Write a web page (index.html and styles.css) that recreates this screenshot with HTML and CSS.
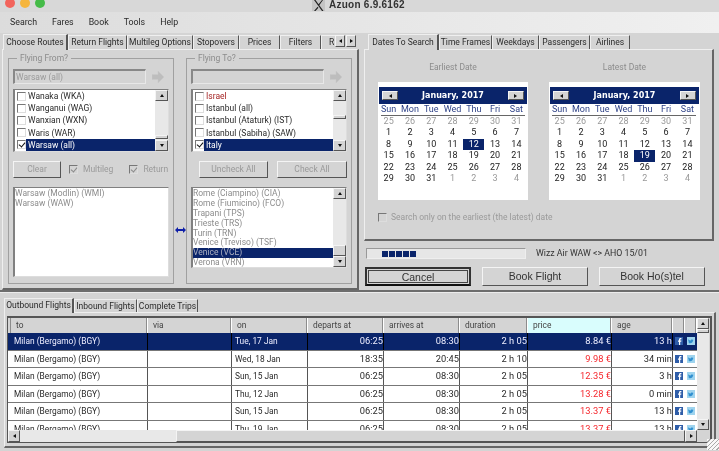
FILE: index.html
```html
<!DOCTYPE html>
<html lang="en">
<head>
<meta charset="utf-8">
<title>Azuon 6.9.6162</title>
<link rel="stylesheet" href="styles.css">
</head>
<body>
<svg class="defs" width="0" height="0">
  <symbol id="fb" viewBox="0 0 8 8"><rect width="8" height="8" fill="#2f5da8"/><path d="M5.2 8V4.8h1l.2-1.3H5.2v-.7c0-.4.1-.6.6-.6h.6V1H5.5C4.5 1 4 1.6 4 2.6v.9H3v1.3h1V8z" fill="#fff"/></symbol>
  <symbol id="tw" viewBox="0 0 8 8"><rect width="8" height="8" fill="#9fd4ee"/><path d="M1.2 2.3c.8.8 1.6 1.2 2.6 1.3 0-1 .9-1.5 1.7-.9l.8-.3-.4.6.6-.1-.5.6c0 1.700-1.500 3-3.500 2.700-.6 0-1-.2-1.400-.5.6 0 1-.1 1.400-.4-.6-.1-1-.4-1.100-.8h.5C1.500 4.200 1.200 3.800 1.200 3.300l.5.1C1.200 3.100 1 2.800 1.200 2.300z" fill="#2f8fd0"/></symbol>
</svg>
<div class="window">
  <header class="titlebar">
    <div class="lights"><i class="light light-red"></i><i class="light light-amber"></i><i class="light light-green"></i></div>
    <svg class="xicon" viewBox="0 0 13 11" width="13" height="11"><rect width="13" height="11" fill="#c4c4c4"/><path d="M2 0l8 11h1.500L3.500 0zM10 0L5.800 5.200l.8 1L11 0zM2 11l3.600-4.300.8 1L3.500 11z" fill="#222"/></svg>
    <span class="apptitle">Azuon 6.9.6162</span>
  </header>
  <nav class="menubar">
    <span>Search</span><span>Fares</span><span>Book</span><span>Tools</span><span>Help</span>
  </nav>

  <div class="top">
    <section class="leftcol">
      <div class="tabs tabs-left">
        <span class="tab active">Choose Routes</span>
        <span class="tab">Return Flights</span>
        <span class="tab">Multileg Options</span>
        <span class="tab">Stopovers</span>
        <span class="tab">Prices</span>
        <span class="tab">Filters</span>
        <span class="tab tab-cut">R</span>
        <span class="tabnav"><i class="btn mini"><b class="tri l"></b></i><i class="btn mini"><b class="tri r"></b></i></span>
      </div>
      <div class="panel routes">
        <fieldset class="group">
          <legend>Flying From?</legend>
          <div class="comborow">
            <div class="field">Warsaw (all)</div>
            <svg class="goarrow" viewBox="0 0 12 12" width="12" height="12"><path d="M0 3.500h6V0l6 6-6 6V8.500H0z" fill="#bdbdbd" stroke="#c8c8c8" stroke-width=".5"/></svg>
          </div>
          <div class="listbox checks">
            <div class="rows">
              <div class="row"><i class="cb"></i><span>Wanaka (WKA)</span></div>
              <div class="row"><i class="cb"></i><span>Wanganui (WAG)</span></div>
              <div class="row"><i class="cb"></i><span>Wanxian (WXN)</span></div>
              <div class="row"><i class="cb"></i><span>Waris (WAR)</span></div>
              <div class="row sel"><i class="cb on"></i><span>Warsaw (all)</span></div>
            </div>
            <div class="vbar"><i class="btn sb"><b class="tri u"></b></i><div class="track thumb-low"><i class="thumb thin"></i></div><i class="btn sb"><b class="tri d"></b></i></div>
          </div>
          <div class="actions">
            <span class="btn action clear">Clear</span>
            <label class="opt multileg"><i class="cb dis on"></i>Multileg</label>
            <label class="opt"><i class="cb dis on"></i>Return</label>
          </div>
          <div class="listbox plain tall">
            <div class="rows dimrows">
              <div class="line">Warsaw (Modlin) (WMI)</div>
              <div class="line">Warsaw (WAW)</div>
            </div>
          </div>
        </fieldset>

        <div class="swap">
          <svg viewBox="0 0 11 6" width="11" height="6"><path d="M0 3l3-3v2h5V0l3 3-3 3V4H3v2z" fill="#0f1fa8"/></svg>
        </div>

        <fieldset class="group">
          <legend>Flying To?</legend>
          <div class="comborow">
            <div class="field"></div>
            <svg class="goarrow" viewBox="0 0 12 12" width="12" height="12"><path d="M0 3.500h6V0l6 6-6 6V8.500H0z" fill="#bdbdbd" stroke="#c8c8c8" stroke-width=".5"/></svg>
          </div>
          <div class="listbox checks">
            <div class="rows">
              <div class="row"><i class="cb"></i><span class="redtext">Israel</span></div>
              <div class="row"><i class="cb"></i><span>Istanbul (all)</span></div>
              <div class="row"><i class="cb"></i><span>Istanbul (Ataturk) (IST)</span></div>
              <div class="row"><i class="cb"></i><span>Istanbul (Sabiha) (SAW)</span></div>
              <div class="row sel"><i class="cb on"></i><span>Italy</span></div>
            </div>
            <div class="vbar"><i class="btn sb"><b class="tri u"></b></i><div class="track thumb-mid"><i class="thumb thin"></i></div><i class="btn sb"><b class="tri d"></b></i></div>
          </div>
          <div class="actions actions-right">
            <span class="btn action uncheck">Uncheck All</span>
            <span class="btn action checkall">Check All</span>
          </div>
          <div class="listbox plain short">
            <div class="rows dimrows tight">
              <div class="line">Rome (Ciampino) (CIA)</div>
              <div class="line">Rome (Fiumicino) (FCO)</div>
              <div class="line">Trapani (TPS)</div>
              <div class="line">Trieste (TRS)</div>
              <div class="line">Turin (TRN)</div>
              <div class="line">Venice (Treviso) (TSF)</div>
              <div class="line sel">Venice (VCE)</div>
              <div class="line">Verona (VRN)</div>
            </div>
            <div class="vbar"><i class="btn sb"><b class="tri u"></b></i><div class="track thumb-end"><i class="thumb"></i></div><i class="btn sb"><b class="tri d"></b></i></div>
          </div>
        </fieldset>
      </div>
    </section>

    <section class="rightcol">
      <div class="tabs tabs-right">
        <span class="tab active">Dates To Search</span>
        <span class="tab">Time Frames</span>
        <span class="tab">Weekdays</span>
        <span class="tab">Passengers</span>
        <span class="tab">Airlines</span>
      </div>
      <div class="panel dates">
        <div class="calendars">
          <div class="calcol">
            <div class="callabel">Earliest Date</div>
            <div class="calendar">
              <div class="calhead"><i class="btn calbtn"><b class="tri l"></b></i><span>January, 2017</span><i class="btn calbtn"><b class="tri r"></b></i></div>
              <div class="weekdays"><span>Sun</span><span>Mon</span><span>Tue</span><span>Wed</span><span>Thu</span><span>Fri</span><span>Sat</span></div>
              <div class="days">
                <span class="off">25</span><span class="off">26</span><span class="off">27</span><span class="off">28</span><span class="off">29</span><span class="off">30</span><span class="off">31</span>
                <span>1</span><span>2</span><span>3</span><span>4</span><span>5</span><span>6</span><span>7</span>
                <span>8</span><span>9</span><span>10</span><span>11</span><span class="picked">12</span><span>13</span><span>14</span>
                <span>15</span><span>16</span><span>17</span><span>18</span><span>19</span><span>20</span><span>21</span>
                <span>22</span><span>23</span><span>24</span><span>25</span><span>26</span><span>27</span><span>28</span>
                <span>29</span><span>30</span><span>31</span><span class="off">1</span><span class="off">2</span><span class="off">3</span><span class="off">4</span>
              </div>
            </div>
          </div>
          <div class="calcol">
            <div class="callabel">Latest Date</div>
            <div class="calendar">
              <div class="calhead"><i class="btn calbtn"><b class="tri l"></b></i><span>January, 2017</span><i class="btn calbtn"><b class="tri r"></b></i></div>
              <div class="weekdays"><span>Sun</span><span>Mon</span><span>Tue</span><span>Wed</span><span>Thu</span><span>Fri</span><span>Sat</span></div>
              <div class="days">
                <span class="off">25</span><span class="off">26</span><span class="off">27</span><span class="off">28</span><span class="off">29</span><span class="off">30</span><span class="off">31</span>
                <span>1</span><span>2</span><span>3</span><span>4</span><span>5</span><span>6</span><span>7</span>
                <span>8</span><span>9</span><span>10</span><span>11</span><span>12</span><span>13</span><span>14</span>
                <span>15</span><span>16</span><span>17</span><span>18</span><span class="picked">19</span><span>20</span><span>21</span>
                <span>22</span><span>23</span><span>24</span><span>25</span><span>26</span><span>27</span><span>28</span>
                <span>29</span><span>30</span><span>31</span><span class="off">1</span><span class="off">2</span><span class="off">3</span><span class="off">4</span>
              </div>
            </div>
          </div>
        </div>
        <label class="opt onlydate"><i class="cb dis"></i>Search only on the earliest (the latest) date</label>
      </div>
      <div class="statusrow">
        <div class="progress"><i></i><i></i><i></i><i></i><i></i></div>
        <span class="status">Wizz Air WAW &lt;&gt; AHO 15/01</span>
      </div>
      <div class="bigbuttons">
        <span class="btn big default"><span>Cancel</span></span>
        <span class="btn big">Book Flight</span>
        <span class="btn big">Book Ho(s)tel</span>
      </div>
    </section>
  </div>

  <section class="bottom">
    <div class="tabs tabs-bottom">
      <span class="tab active">Outbound Flights</span>
      <span class="tab">Inbound Flights</span>
      <span class="tab">Complete Trips</span>
    </div>
    <div class="panel results">
      <div class="frame">
        <div class="viewport">
          <div class="gridrow head">
            <span class="first">to</span><span>via</span><span>on</span><span>departs at</span><span>arrives at</span><span>duration</span><span class="sorted">price</span><span>age</span><span></span><span></span>
          </div>
          <div class="gridrow selrow">
            <span class="first">Milan (Bergamo) (BGY)</span><span></span><span>Tue, 17 Jan</span><span class="n">06:25</span><span class="n">08:30</span><span class="n">2 h 05</span><span class="n">8.84 €</span><span class="n">13 h</span><span class="ic"><svg><use href="#fb"/></svg></span><span class="ic"><svg><use href="#tw"/></svg></span>
          </div>
          <div class="gridrow">
            <span class="first">Milan (Bergamo) (BGY)</span><span></span><span>Wed, 18 Jan</span><span class="n">18:35</span><span class="n">20:45</span><span class="n">2 h 10</span><span class="n high">9.98 €</span><span class="n">34 min</span><span class="ic"><svg><use href="#fb"/></svg></span><span class="ic"><svg><use href="#tw"/></svg></span>
          </div>
          <div class="gridrow">
            <span class="first">Milan (Bergamo) (BGY)</span><span></span><span>Sun, 15 Jan</span><span class="n">06:25</span><span class="n">08:30</span><span class="n">2 h 05</span><span class="n high">12.35 €</span><span class="n">3 h</span><span class="ic"><svg><use href="#fb"/></svg></span><span class="ic"><svg><use href="#tw"/></svg></span>
          </div>
          <div class="gridrow">
            <span class="first">Milan (Bergamo) (BGY)</span><span></span><span>Thu, 12 Jan</span><span class="n">06:25</span><span class="n">08:30</span><span class="n">2 h 05</span><span class="n high">13.28 €</span><span class="n">0 min</span><span class="ic"><svg><use href="#fb"/></svg></span><span class="ic"><svg><use href="#tw"/></svg></span>
          </div>
          <div class="gridrow">
            <span class="first">Milan (Bergamo) (BGY)</span><span></span><span>Sun, 15 Jan</span><span class="n">06:25</span><span class="n">08:30</span><span class="n">2 h 05</span><span class="n high">13.37 €</span><span class="n">13 h</span><span class="ic"><svg><use href="#fb"/></svg></span><span class="ic"><svg><use href="#tw"/></svg></span>
          </div>
          <div class="gridrow">
            <span class="first">Milan (Bergamo) (BGY)</span><span></span><span>Thu, 19 Jan</span><span class="n">06:25</span><span class="n">08:30</span><span class="n">2 h 05</span><span class="n high">13.37 €</span><span class="n">13 h</span><span class="ic"><svg><use href="#fb"/></svg></span><span class="ic"><svg><use href="#tw"/></svg></span>
          </div>
        </div>
        <div class="vbar tablebar"><i class="btn sb"><b class="tri u"></b></i><div class="track"><i class="thumb thin"></i></div><i class="btn sb"><b class="tri d"></b></i></div>
        <div class="hbar">
          <i class="btn hb"><b class="tri l"></b></i><div class="htrack"></div><div class="hthumb"></div><i class="btn hb"><b class="tri r"></b></i>
        </div>
        <div class="corner"></div>
      </div>
    </div>
    <div class="grip"></div>
  </section>
</div>
</body>
</html>
```
FILE: styles.css
```css
* { box-sizing: border-box; }
html, body { margin: 0; padding: 0; }
body { width: 719px; height: 451px; overflow: hidden; background: #d4d4d4; }
.defs { display: block; height: 0; }
.window {
  width: 719px; height: 451px; overflow: hidden; background: #d4d4d4;
  font: 8.500px/1.2 Roboto, "Liberation Sans", Arial, sans-serif; color: #2a2a2a;
  filter: blur(.4px);
}
i { display: block; font-style: normal; }

/* title bar */
.titlebar { height: 12px; background: #d8d8d8; display: flex; align-items: flex-start; overflow: hidden; }
.lights { display: flex; gap: 5px; margin: -2px 0 0 5px; width: 307px; }
.light { width: 10px; height: 10px; border-radius: 50%; }
.light-red { background: #f2645c; }
.light-amber { background: #f5b53d; }
.light-green { background: #45bb48; }
.xicon { margin: 0 4px 0 0; }
.apptitle { font-family: "Liberation Sans", Arial, sans-serif; font-size: 10px; font-weight: bold; line-height: 10px; letter-spacing: .25px; color: #333; }

/* menu */
.menubar { height: 21px; display: flex; align-items: center; padding: 0 0 0 10px; gap: 15px; font-size: 8.800px; background: linear-gradient(90deg, #dcdcdc, #e4e4e4 40%, #f0f0f0); }

/* layout */
.top { height: 259px; display: grid; grid-template-columns: 361px 358px; border-bottom: 2px solid #6d6d6d; }
.leftcol, .rightcol { min-width: 0; }
.tabs { display: grid; height: 16px; align-items: end; }
.tabs-left { grid-template-columns: 65px 59px 66px 46px 41px 41px 14px 22px; margin-left: 3px; }
.tabs-right { grid-template-columns: 71px 53px 47px 51px 40px; margin-left: 4px; }
.tab {
  height: 14px; background: #d4d4d4; text-align: center; line-height: 13px; white-space: nowrap; overflow: hidden;
  border-top: 1px solid #efefef; border-left: 1px solid #efefef; border-right: 1.500px solid #555;
}
.tab.active { height: 16px; line-height: 14px; border-right-width: 2px; position: relative; z-index: 1; margin-bottom: -1px; }
.tab-cut { text-align: left; padding-left: 7px; border-right: 0; }
.tabnav { display: flex; gap: 1px; height: 12px; align-self: center; }
.panel { border-top: 1px solid #efefef; border-left: 1px solid #efefef; border-right: 2px solid #666; border-bottom: 2px solid #666; }

/* buttons */
.btn {
  background: #d4d4d4; display: flex; align-items: center; justify-content: center;
  border: 1px solid; border-color: #f4f4f4 #555 #555 #f4f4f4;
}
.mini { width: 10px; height: 12px; }
.tri { display: block; width: 0; height: 0; border: 2.500px solid transparent; }
.tri.l { border-right: 3px solid #111; border-left-width: 0; }
.tri.r { border-left: 3px solid #111; border-right-width: 0; }
.tri.u { border-bottom: 3px solid #111; border-top-width: 0; }
.tri.d { border-top: 3px solid #111; border-bottom-width: 0; }

/* routes panel */
.routes { height: 241px; margin-left: 2px; width: 357px; display: grid; grid-template-columns: 166px 12px 166px; padding: 2px 0 0 5px; align-items: start; }
.group { margin: 0; padding: 5px 4px 0; height: 232px; border: 1px solid #a0a0a0; min-width: 0; }
.group legend { color: #8c8c8c; line-height: 12px; padding: 0 3px; margin-left: 4px; }
.comborow { display: flex; align-items: center; gap: 6px; height: 15px; }
.field { width: 133px; height: 15px; background: #d4d4d4; color: #9a9a9a; line-height: 12px; padding-left: 1px; border: 1px solid; border-width: 2px 1px 1px 2px; border-color: #888 #e8e8e8 #e8e8e8 #888; }
.listbox { display: flex; width: 156px; background: #fff; border: 1px solid #808080; border-right-color: #ddd; border-bottom-color: #ddd; border-left-width: 2px; overflow: hidden; }
.checks { margin-top: 5px; height: 63px; }
.rows { flex: 1; min-width: 0; overflow: hidden; }
.row { display: flex; align-items: center; height: 12.200px; padding-left: 2px; white-space: nowrap; }
.row span { flex: 1; height: 100%; line-height: 12px; padding-left: 2px; }
.row.sel span { background: #0a246a; color: #fff; }
.redtext { color: #a52525; }
.cb { width: 9px; height: 9px; background: #fff; border: 1px solid; border-color: #777 #ddd #ddd #777; position: relative; flex: none; }
.cb.on::after { content: ""; position: absolute; left: 2px; top: 0; width: 3px; height: 5px; border: solid #111; border-width: 0 1.500px 1.500px 0; transform: rotate(40deg); }
.cb.dis { background: #d4d4d4; }
.cb.dis.on::after { border-color: #8a8a8a; }
.vbar { width: 13px; flex: none; display: flex; flex-direction: column; background: #e8e8e8; }
.sb { height: 11px; flex: none; }
.track { flex: 1; display: flex; flex-direction: column; }
.thumb { background: #d4d4d4; border: 1px solid; border-color: #f4f4f4 #555 #555 #f4f4f4; height: 11px; }
.thumb.thin { height: 4px; }
.thumb-low { justify-content: flex-end; padding-bottom: 1px; }
.thumb-mid { padding-top: 14px; }
.thumb-end { justify-content: flex-end; }
.actions { display: flex; align-items: center; height: 17px; margin-top: 9px; }
.action { height: 17px; color: #9a9a9a; }
.clear { width: 48px; }
.opt { display: flex; align-items: center; gap: 5px; color: #9a9a9a; }
.multileg { margin: 0 16px 0 8px; }
.actions-right { gap: 9px; padding-left: 8px; }
.uncheck { width: 69px; }
.checkall { width: 70px; }
.plain { margin-top: 9px; }
.tall { height: 90px; }
.short { height: 81px; }
.dimrows { color: #8c8c8c; padding-top: 1px; }
.line { height: 9.900px; line-height: 9.900px; white-space: nowrap; }
.line.sel { background: #0a246a; color: #b0b4c4; }
.swap { padding-top: 175px; display: flex; justify-content: center; }

/* dates panel */
.rightcol { padding-left: 3px; }
.dates { width: 350px; height: 192px; padding: 11px 0 0 13px; }
.calendars { display: grid; grid-template-columns: 150px 151px; gap: 21px; }
.callabel { text-align: center; color: #8c8c8c; line-height: 12px; height: 21px; }
.calendar { height: 118px; background: #fff; padding-top: 5px; }
.calhead { height: 17px; margin: 0 1px; background: #0a246a; color: #fff; font-weight: bold; font-family: "DejaVu Sans", sans-serif; font-size: 8px; display: flex; align-items: center; justify-content: space-between; padding: 0 3px; }
.calbtn { width: 16px; height: 9px; }
.weekdays, .days { display: grid; grid-template-columns: repeat(7, 21.300px); text-align: center; font-size: 9px; }
.weekdays { height: 12px; line-height: 11px; color: #2b3f85; background: linear-gradient(#666, #666) 3px 100%/144px 1px no-repeat; }
.days { grid-auto-rows: 11.400px; line-height: 11.400px; color: #222; }
.off { color: #999; }
.picked { background: #0a246a; color: #fff; }
.onlydate { margin-top: 12px; gap: 4px; }

.statusrow { display: flex; align-items: center; height: 12px; margin: 6px 0 0 2px; }
.progress { width: 160px; height: 11px; display: flex; gap: 1px; padding: 2px 0 1px 15px; background: #e6e6e6; border: 1px solid; border-color: #999 #eee #eee #999; }
.progress i { width: 6px; background: #0a246a; }
.status { margin-left: 10px; color: #333; font-size: 8.800px; }
.bigbuttons { display: grid; grid-template-columns: repeat(3, 106px); gap: 11px; margin: 8px 0 0 1px; }
.big { height: 19px; font-family: "Liberation Sans", Arial, sans-serif; font-size: 10.500px; color: #333; }
.default { border: 2px solid #333; border-bottom-color: #111; padding: 1px; }
.default span { flex: 1; height: 100%; text-align: center; line-height: 12px; border: 1px solid #444; }

/* results */
.bottom { height: 158px; padding: 5px 0 0 4px; border-top: 1px solid #ececec; position: relative; }
.tabs-bottom { grid-template-columns: 70px 63px 61px; height: 14px; }
.tabs-bottom .tab { height: 13px; line-height: 12px; }
.tabs-bottom .tab.active { height: 15px; line-height: 13px; }
.results { width: 712px; height: 136px; padding: 3px 0 0 2px; }
.frame { width: 705px; height: 127px; display: grid; grid-template-columns: 689px 13px; grid-template-rows: 112px 12px; border: 1px solid #555; border-width: 2px 2px 1px 1px; }
.viewport { background: #fff; overflow: hidden; }
.gridrow { display: grid; grid-template-columns: 140px 84px 76px 76px 76px 68px 84px 61px 12px 12px; height: 17.500px; border-bottom: 1px solid #777; }
.gridrow > span { border-right: 1px solid #555; padding: 0 0 0 1px; line-height: 16px; font-size: 8.400px; white-space: nowrap; overflow: hidden; }
.gridrow .first { padding-left: 6px; }
.gridrow .n { text-align: right; padding: 0; font-size: 9.300px; }
.gridrow .high { color: #f5262c; }
.gridrow > span:nth-child(3) { padding-left: 3px; }
.gridrow .ic { padding: 4px 0 0 2px; border-right: 0; }
.ic svg { display: block; width: 8px; height: 8px; }
.head { height: 15px; background: #d4d4d4; border-bottom: 0; }
.head > span { padding-left: 5px; line-height: 14px; color: #444; border-right: 1px solid #fff; box-shadow: inset -1px 0 #8c8c8c; }
.head > span:nth-child(3) { padding-left: 5px; }
.head .first { padding-left: 8px; background: linear-gradient(#8c8c8c, #8c8c8c) 2px 0/1px 100% no-repeat; }
.head .sorted { background: #d9fdfd; }
.selrow { background: #0a246a; color: #eef; }
.selrow > span { border-right-color: #000; }
.tablebar { width: 12px; }
.hbar { display: flex; background: #e8e8e8; }
.hb { width: 12px; flex: none; }
.htrack { width: 156px; }
.hthumb { flex: 1; background: #d4d4d4; border: 1px solid; border-color: #f4f4f4 #555 #555 #f4f4f4; }
.corner { background: #d4d4d4; }
.grip { position: absolute; right: 0; bottom: 0; width: 12px; height: 11px; background: repeating-linear-gradient(135deg, #f8f8f8 0 2px, #aaa 2px 3px); }
```
